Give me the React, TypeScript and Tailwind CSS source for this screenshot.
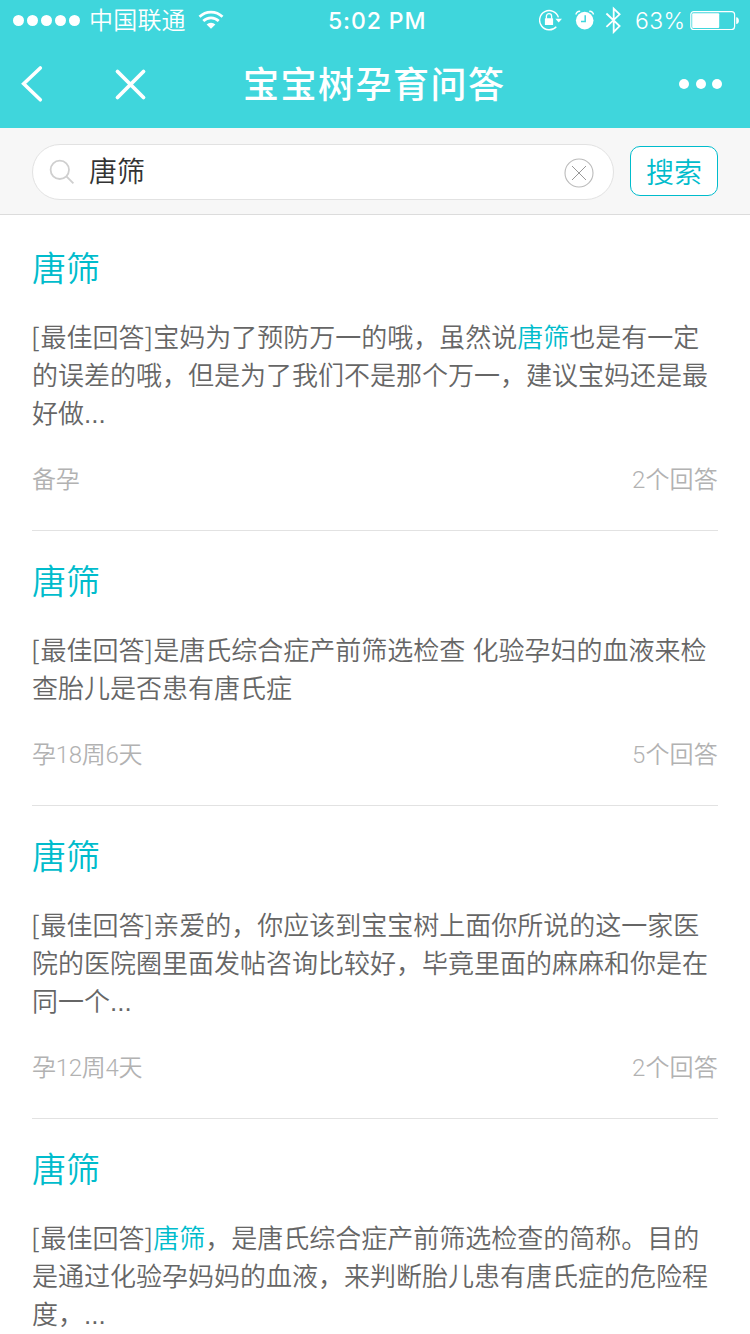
import { Fragment, useState } from "react";

interface Answer {
	id: number;
	title: string;
	/** Visual lines, every occurrence of the keyword gets highlighted */
	lines: string[];
	stage?: string;
	count?: number;
}

const KEYWORD = "唐筛";

const ANSWERS: Answer[] = [
	{
		id: 1,
		title: "唐筛",
		lines: [
			"宝妈为了预防万一的哦，虽然说唐筛也是有一定",
			"的误差的哦，但是为了我们不是那个万一，建议宝妈还是最",
			"好做...",
		],
		stage: "备孕",
		count: 2,
	},
	{
		id: 2,
		title: "唐筛",
		lines: [
			"是唐氏综合症产前筛选检查 化验孕妇的血液来检",
			"查胎儿是否患有唐氏症",
		],
		stage: "孕18周6天",
		count: 5,
	},
	{
		id: 3,
		title: "唐筛",
		lines: [
			"亲爱的，你应该到宝宝树上面你所说的这一家医",
			"院的医院圈里面发帖咨询比较好，毕竟里面的麻麻和你是在",
			"同一个...",
		],
		stage: "孕12周4天",
		count: 2,
	},
	{
		id: 4,
		title: "唐筛",
		lines: [
			"唐筛，是唐氏综合症产前筛选检查的简称。目的",
			"是通过化验孕妈妈的血液，来判断胎儿患有唐氏症的危险程",
			"度，...",
		],
	},
];

function StatusBar() {
	return (
		<div className="flex h-10 items-center text-white">
			<div className="flex w-[328px] items-center pl-[13px]">
				<div className="flex gap-[3px]">
					{[0, 1, 2, 3, 4].map((dot) => (
						<span className="size-[11px] rounded-full bg-white" key={dot} />
					))}
				</div>
				<span className="ml-[9px] pt-0.5 font-[350] text-[24px] leading-10 tracking-[0.2px]">
					中国联通
				</span>
				<svg
					className="ml-[12px]"
					fill="none"
					height="20"
					viewBox="0 0 26 20"
					width="26"
				>
					<path
						d="M1.5 6.8a16.3 16.3 0 0 1 23 0M5.3 11a11 11 0 0 1 15.4 0"
						stroke="white"
						strokeWidth="2.7"
					/>
					<path d="M13 18.8 8.6 14.6a6.3 6.3 0 0 1 8.8 0Z" fill="white" />
				</svg>
			</div>
			<span className="w-[211px] pt-px font-[Inter] font-medium text-[23px] leading-10 tracking-[0.9px]">
				5:02 PM
			</span>
			<svg fill="none" height="22" viewBox="0 0 24 22" width="24">
				<path
					d="M17.3 17.7A9.6 9.6 0 1 1 19.4 8.4"
					stroke="white"
					strokeWidth="1.4"
				/>
				<path d="M16.4 9.8h6.6l-3.3 3.6Z" fill="white" />
				<rect fill="white" height="6.8" rx="0.6" width="8.2" x="5.9" y="9.2" />
				<path
					d="M7.4 9.7V7.2a2.6 2.6 0 0 1 5.2 0v2.5"
					stroke="white"
					strokeWidth="1.3"
				/>
			</svg>
			<svg
				className="ml-[12px]"
				fill="none"
				height="20"
				viewBox="0 0 20 20"
				width="20"
			>
				<circle cx="9.7" cy="10.6" fill="white" r="8.8" />
				<path d="M10.2 5.2v6.4H6" stroke="#3fd6dc" strokeWidth="1.5" />
				<path
					d="M1 4.6C1 2.4 3 1 5.2 1.4M18.4 4.6c0-2.2-2-3.6-4.2-3.2"
					stroke="white"
					strokeWidth="1.5"
				/>
			</svg>
			<svg
				className="ml-[10px]"
				fill="none"
				height="28"
				viewBox="0 0 18 28"
				width="18"
			>
				<path
					d="m1.4 7.5 13.2 12.6-5.9 5.9V2.6l5.9 5.7L1.4 20.9"
					stroke="white"
					strokeWidth="1.8"
				/>
			</svg>
			<span className="ml-[12px] w-[55px] pt-px font-[350] font-[Inter] text-[23px] leading-10 tracking-[0.4px]">
				63%
			</span>
			<svg fill="none" height="20" viewBox="0 0 50 20" width="50">
				<rect
					height="18"
					rx="3"
					stroke="white"
					strokeWidth="1.2"
					width="43.8"
					x="0.8"
					y="1.6"
				/>
				<rect fill="white" height="14.6" rx="1" width="27" x="2.2" y="3.3" />
				<path d="M46.2 7.2c3.6 0 3.6 6.8 0 6.8Z" fill="white" />
			</svg>
		</div>
	);
}

function NavBar() {
	return (
		<div className="flex h-[88px] items-center text-white">
			<button aria-label="返回" className="pl-5" type="button">
				<svg fill="none" height="38" viewBox="0 0 24 38" width="24">
					<path
						d="M20.3 3 3.7 18.8l16.6 16"
						stroke="white"
						strokeLinecap="round"
						strokeWidth="3.6"
					/>
				</svg>
			</button>
			<button aria-label="关闭" className="ml-[70px]" type="button">
				<svg fill="none" height="34" viewBox="0 0 34 34" width="34">
					<path
						d="m3.5 4.5 26 26M29.5 4.5l-26 26"
						stroke="white"
						strokeLinecap="round"
						strokeWidth="3.8"
					/>
				</svg>
			</button>
			<h1 className="ml-[95px] flex-1 pt-1 font-medium text-[36px] leading-[48px] tracking-[1.5px]">
				宝宝树孕育问答
			</h1>
			<button aria-label="更多" className="flex gap-[6.5px] pr-7" type="button">
				<span className="size-[10px] rounded-full bg-white" />
				<span className="size-[10px] rounded-full bg-white" />
				<span className="size-[10px] rounded-full bg-white" />
			</button>
		</div>
	);
}

function SearchBar() {
	const [query, setQuery] = useState(KEYWORD);

	return (
		<div className="flex h-[87px] items-center border-[#dcdcdc] border-b bg-[#f7f7f7] px-8">
			<div className="mt-0.5 flex h-14 w-[582px] items-center rounded-full border border-[#e2e2e2] bg-white pr-[19px] pl-4">
				<svg fill="none" height="26" viewBox="0 0 26 26" width="26">
					<circle cx="10.8" cy="10.8" r="9.2" stroke="#cfcfcf" strokeWidth="1.8" />
					<path d="m17.4 17.4 7 7" stroke="#cfcfcf" strokeWidth="1.8" />
				</svg>
				<input
					className="ml-[14px] h-10 min-w-0 flex-1 pt-0.5 font-[350] text-[#333] text-[28px] outline-none"
					onChange={(e) => setQuery(e.target.value)}
					value={query}
				/>
				<button aria-label="清除" onClick={() => setQuery("")} type="button">
					<svg
						className="mt-px"
						fill="none"
						height="30"
						viewBox="0 0 30 30"
						width="30"
					>
						<circle cx="15" cy="15" r="14" stroke="#bbb" strokeWidth="1.1" />
						<path
							d="m8 8 14 14M22 8 8 22"
							stroke="#999"
							strokeWidth="1"
						/>
					</svg>
				</button>
			</div>
			<button
				className="ml-4 h-[50px] w-[88px] rounded-[10px] border border-[#00bccc] bg-white pt-[5px] font-[350] text-[#00bccc] text-[28px] leading-[42px]"
				type="button"
			>
				搜索
			</button>
		</div>
	);
}

function Highlighted({ text }: { text: string }) {
	return text.split(KEYWORD).map((part, i) => (
		<Fragment key={`${i}-${part}`}>
			{i > 0 && <em className="text-[#00bccc] not-italic">{KEYWORD}</em>}
			{part}
		</Fragment>
	));
}

function AnswerItem({ answer }: { answer: Answer }) {
	return (
		<li className="border-[#e2e2e2] border-b pt-8 pb-[33px] font-[350] last:border-b-0 last:pb-0">
			<h2 className="text-[#00bccc] text-[34px] leading-[38px]">
				{answer.title}
			</h2>
			<div className="mt-[31px] whitespace-nowrap text-[#666] text-[26px] leading-[38px]">
				{answer.lines.map((line, i) => (
					<p key={line}>
						{i === 0 && (
							<span className="font-['Noto_Sans_CJK_SC'] leading-none">
								<span className="-ml-px mr-px">[</span>
								最佳回答]
							</span>
						)}
						<Highlighted text={line} />
					</p>
				))}
			</div>
			{answer.stage && (
				<div className="mt-[30px] flex justify-between font-['Roboto','Noto_Sans_CJK_SC',sans-serif] text-[#b2b2b2] text-[24px] leading-[34px]">
					<span className="tracking-[-0.3px]">{answer.stage}</span>
					<span className="tracking-[0.2px]">{answer.count}个回答</span>
				</div>
			)}
		</li>
	);
}

export default function App() {
	return (
		<div className="h-[1334px] w-[750px] overflow-hidden bg-white font-['Liberation_Sans','Noto_Sans_CJK_SC',sans-serif]">
			<header className="bg-[#3fd6dc]">
				<StatusBar />
				<NavBar />
			</header>
			<SearchBar />
			<ul className="px-8 pt-[3px]">
				{ANSWERS.map((answer) => (
					<AnswerItem answer={answer} key={answer.id} />
				))}
			</ul>
		</div>
	);
}
